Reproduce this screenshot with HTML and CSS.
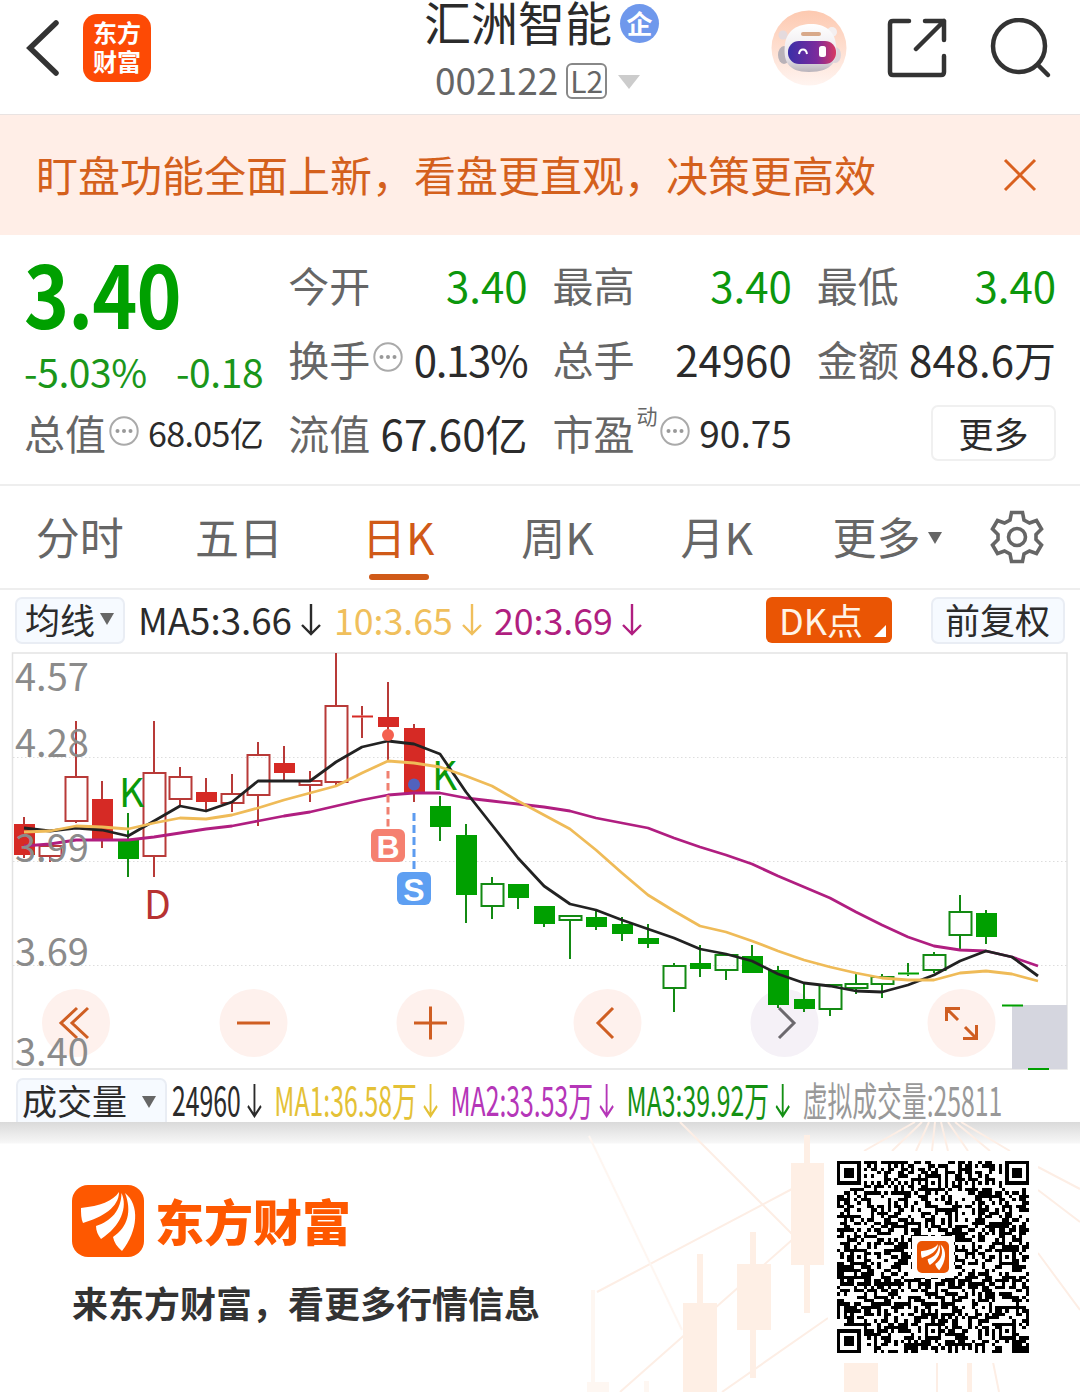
FILE: index.html
```html
<!DOCTYPE html>
<html lang="zh-CN">
<head>
  <meta charset="UTF-8" />
  <meta name="viewport" content="width=device-width, initial-scale=1.0"/>
  <title>汇洲智能 002122</title>
  <link rel="stylesheet" href="styles.css">
</head>
<body>
  <svg width="0" height="0" class="defs">
    <symbol id="dots" viewBox="0 0 30 30">
      <circle cx="15" cy="15" r="13.7" fill="none" stroke="#aaa" stroke-width="2"/>
      <circle cx="8.5" cy="15" r="2" fill="#999"/><circle cx="15" cy="15" r="2" fill="#999"/><circle cx="21.5" cy="15" r="2" fill="#999"/>
    </symbol>
    <symbol id="down" viewBox="0 0 20 32">
      <path d="M10 0V30M1 21L10 30L19 21" fill="none" stroke="currentColor" stroke-width="2.4"/>
    </symbol>
    <symbol id="down-tall" viewBox="0 0 24 34" preserveAspectRatio="none">
      <path d="M12 0V32M1.5 22L12 32L22.5 22" fill="none" stroke="currentColor" stroke-width="3"/>
    </symbol>
    <symbol id="leaf" viewBox="0 0 72 72">
      <path d="M9 23C28 21 41 16 47 7C47 22 31 32 11 38C9 34 9 28 9 23Z"/>
      <path d="M24 41C39 36 49 26 49.500 8C56 22 49 41 29 54C26 50 24 46 24 41Z"/>
      <path d="M41 52C56 42 60 26 53 8C68 20 66 46 50 66C45 62 42 57 41 52Z"/>
    </symbol>
  </svg>

  <header class="header">
    <div class="header-left">
      <svg class="back" width="36" height="58" viewBox="0 0 36 58"><path d="M30 4L4 29L30 54" fill="none" stroke="#333" stroke-width="5.500" stroke-linecap="round"/></svg>
      <div class="app-icon">东方<br>财富</div>
    </div>
    <div class="stock">
      <div class="stock-name"><span>汇洲智能</span><span class="badge">企</span></div>
      <div class="stock-code"><span>002122</span><span class="level">L2</span><span class="tri tri-light"></span></div>
    </div>
    <div class="header-right">
      <svg width="76" height="76" viewBox="0 0 76 76">
        <defs>
          <linearGradient id="halo" x1="0" y1="0" x2="0" y2="1"><stop offset="0" stop-color="#fdc9b0"/><stop offset="1" stop-color="#fff4f0"/></linearGradient>
          <linearGradient id="visor"><stop offset="0" stop-color="#3a2fa8"/><stop offset=".6" stop-color="#7b2a9c"/><stop offset="1" stop-color="#d83a62"/></linearGradient>
          <linearGradient id="head" x1="0" y1="0" x2="0" y2="1"><stop offset="0" stop-color="#fff"/><stop offset=".7" stop-color="#e9e5ea"/><stop offset="1" stop-color="#b9b3bb"/></linearGradient>
        </defs>
        <circle cx="38" cy="38" r="37.5" fill="url(#halo)"/>
        <circle cx="12" cy="25" r="4.5" fill="#e4dadd"/><circle cx="61" cy="22" r="5" fill="#f4eff0"/>
        <ellipse cx="13" cy="45" rx="6" ry="9" fill="#b9b2b8"/><ellipse cx="64" cy="45" rx="6" ry="8" fill="#ddd5da"/>
        <path d="M14 34C16 20 27 14 40 14C54 14 64 21 65 35C67 50 62 62 38 62C16 62 12 50 14 34Z" fill="url(#head)"/>
        <rect x="30" y="22" width="20" height="4" rx="2" fill="#d8a98a"/>
        <rect x="17" y="31" width="48" height="23" rx="11" fill="url(#visor)"/>
        <path d="M28 44C29 38 35 38 36 44" fill="none" stroke="#fff" stroke-width="2"/>
        <rect x="48" y="36" width="7" height="11" rx="2.500" fill="#fff"/>
      </svg>
      <svg class="share" width="60" height="62" viewBox="0 0 60 62" fill="none" stroke="#333" stroke-width="4.500" stroke-linecap="round" stroke-linejoin="round">
        <path d="M22 4H6Q3 4 3 7V55Q3 58 6 58H54Q57 58 57 55V39M38 4H57V23M57 4L29 32"/>
      </svg>
      <svg class="search" width="62" height="62" viewBox="0 0 62 62" fill="none" stroke="#333" stroke-width="4.500" stroke-linecap="round">
        <circle cx="29" cy="28" r="26"/><path d="M48 47L58 57"/>
      </svg>
    </div>
  </header>

  <div class="notice">
    <span>盯盘功能全面上新，看盘更直观，决策更高效</span>
    <svg width="34" height="34" viewBox="0 0 34 34"><path d="M2 2L32 32M32 2L2 32" stroke="#d9601f" stroke-width="3"/></svg>
  </div>

  <section class="quote">
    <div class="price-box">
      <div class="price">3.40</div>
      <div class="change"><span>-5.03%</span><span>-0.18</span></div>
    </div>
    <div class="cell"><label>今开</label><b class="green">3.40</b></div>
    <div class="cell"><label>最高</label><b class="green">3.40</b></div>
    <div class="cell"><label>最低</label><b class="green">3.40</b></div>
    <div class="cell"><label>换手</label><svg class="info"><use href="#dots"/></svg><b class="rate">0.13%</b></div>
    <div class="cell"><label>总手</label><b>24960</b></div>
    <div class="cell"><label>金额</label><b>848.6万</b></div>
    <div class="cell"><label>总值</label><svg class="info"><use href="#dots"/></svg><b class="cap">68.05亿</b></div>
    <div class="cell"><label>流值</label><b>67.60亿</b></div>
    <div class="cell"><label>市盈</label><sup>动</sup><svg class="info"><use href="#dots"/></svg><b class="pe">90.75</b></div>
    <div class="cell"><button class="more">更多</button></div>
  </section>

  <nav class="tabs">
    <a>分时</a>
    <a>五日</a>
    <a class="active">日K</a>
    <a>周K</a>
    <a>月K</a>
    <a class="tab-more">更多<span class="tri tri-small"></span></a>
    <svg width="54" height="54" viewBox="0 0 54 54" fill="none" stroke="#666" stroke-width="3.6">
      <path d="M21.5 2.5H32.5L34 10L39.5 13L46.5 10.5L51.5 19L46 24.5V29.5L51.5 35L46.5 43.5L39.5 41L34 44L32.5 51.5H21.5L20 44L14.5 41L7.500 43.500L2.500 35L8 29.500V24.500L2.500 19L7.500 10.500L14.500 13L20 10Z"/>
      <circle cx="27" cy="27" r="8.500"/>
    </svg>
  </nav>

  <div class="ma-row">
    <div class="chip chip-ma">均线<span class="tri tri-small"></span></div>
    <div class="ma ma5">MA5:3.66<svg><use href="#down"/></svg></div>
    <div class="ma ma10">10:3.65<svg><use href="#down"/></svg></div>
    <div class="ma ma20">20:3.69<svg><use href="#down"/></svg></div>
    <div class="dk">DK点<i></i></div>
    <div class="chip chip-right">前复权</div>
  </div>

  <div class="chart-box">
    <svg class="chart" id="chart" width="1080" height="424" viewBox="0 650 1080 424">
      <rect x="12.500" y="653" width="1054.500" height="416" fill="none" stroke="#e3e3e3" stroke-width="1.500"/>
      <path class="grid" d="M13 757.500H1067M13 861.500H1067M13 965.500H1067"/>
      <rect x="1012" y="1005" width="55" height="64" fill="#d5d6df"/>
      <g id="zoom-buttons">
        <circle cx="76" cy="1023" r="34"/>
        <circle cx="253.500" cy="1023" r="34"/>
        <circle cx="430.500" cy="1023" r="34"/>
        <circle cx="607.500" cy="1023" r="34"/>
        <circle cx="784.500" cy="1023" r="34" class="disabled"/>
        <circle cx="961.500" cy="1023" r="34"/>
      </g>
      <g id="candles"></g>
      <text x="119" y="807" class="mark" fill="#0a9a0a">K</text>
      <text x="432" y="790" class="mark" fill="#0a9a0a">K</text>
      <text x="144" y="919" class="mark" fill="#b73232">D</text>
      <g id="lines"></g>
      <circle cx="388" cy="735" r="6" fill="#f4604f"/>
      <circle cx="414" cy="784.500" r="6" fill="#5162bd"/>
      <path d="M388 771V828" stroke="#f08070" stroke-width="3" stroke-dasharray="7.500 4.500"/>
      <path d="M414 813V870" stroke="#5d9cf0" stroke-width="3" stroke-dasharray="8 4"/>
      <rect x="371" y="829" width="34" height="33" rx="6" fill="#f58070"/>
      <rect x="397" y="872" width="34" height="33" rx="6" fill="#5e9ff2"/>
      <text x="388" y="857.500" class="flag">B</text>
      <text x="414" y="900.500" class="flag">S</text>
      <g fill="none" stroke="#cf5e22" stroke-width="3">
        <path d="M77 1008L61 1023L77 1038M88 1008L72 1023L88 1038"/>
        <path d="M237 1023H270"/>
        <path d="M414 1023H447M430.500 1006.500V1039.500"/>
        <path d="M613 1008L598 1023L613 1038"/>
        <path d="M779 1008L794 1023L779 1038" stroke="#6c696e"/>
        <path d="M946.500 1021V1008.500H960M947 1009L958 1020M976.500 1025V1038.500H963M976 1038L965 1027"/>
      </g>
      <g class="axis">
        <text x="15" y="691">4.57</text>
        <text x="15" y="757">4.28</text>
        <text x="15" y="862">3.99</text>
        <text x="15" y="966">3.69</text>
        <text x="15" y="1066">3.40</text>
      </g>
    </svg>
  </div>

  <div class="vol-row">
    <div class="chip chip-vol">成交量<span class="tri tri-small"></span></div>
    <div class="vol-values">
      <span class="v0">24960<svg><use href="#down-tall"/></svg></span>
      <span class="v1">MA1:36.58万<svg><use href="#down-tall"/></svg></span>
      <span class="v2">MA2:33.53万<svg><use href="#down-tall"/></svg></span>
      <span class="v3">MA3:39.92万<svg><use href="#down-tall"/></svg></span>
      <span class="v4">虚拟成交量:25811</span>
    </div>
  </div>

  <footer class="footer">
    <svg class="footer-bg" width="1080" height="270" viewBox="0 1122 1080 270">
      <g stroke="#fdeee5" stroke-width="2" fill="none">
        <path d="M680 1122L792 1234M597 1292L792 1189M620 1392L792 1240M722 1392L828 1318"/>
        <path d="M589 1136L682 1330" stroke="#fef6f1"/>
        <path d="M915 1122L864 1151M922 1122L892 1151M929 1122L916 1151M935 1122L932 1151M941 1122L948 1151M948 1122L968 1151M955 1122L990 1151M961 1122L1010 1151M1038 1167L1080 1189M1038 1190L1080 1222M1038 1253L1080 1310M937 1362V1392M993 1362L999 1392"/>
      </g>
      <g fill="#feefe5">
        <path d="M804 1135h6v28h14v102h-14v48h-6v-48h-13v-102h13z"/>
        <path d="M750 1232h6v32h15v66h-15v48h-6v-48h-13v-66h13z"/>
        <path d="M697 1254h6v49h14v89h-34v-89h14z"/>
        <path d="M844 1362h34v30h-34zM967 1362h5v30h-5z"/>
        <path d="M591 1290h4v92h14v10h-22v-10h4zM644 1381h5v11h-5z" fill="#fef7f2"/>
      </g>
    </svg>
    <div class="brand">
      <div class="brand-top">
        <svg class="brand-logo"><use href="#leaf"/></svg>
        <span>东方财富</span>
      </div>
      <p>来东方财富，看更多行情信息</p>
    </div>
    <div class="qr">
      <svg id="qr" width="192" height="192" viewBox="0 0 57 57" shape-rendering="crispEdges"></svg>
      <div class="qr-logo"><svg><use href="#leaf"/></svg></div>
    </div>
  </footer>

  <script src="script.js"></script>
</body>
</html>
```

FILE: styles.css
```css
* {
  margin: 0; padding: 0; box-sizing: border-box;
}

body {
  width: 1080px;
  height: 1392px;
  overflow: hidden;
  background: #fff;
  color: #2b2b2b;
  font-family: 'Noto Sans CJK SC', sans-serif;
  white-space: nowrap;
}

svg { flex: none; }
.defs { position: absolute; }

.tri {
  display: inline-block;
  border-style: solid;
  border-color: #666 transparent transparent;
}
.tri-light {
  border-width: 14px 11px 0;
  border-top-color: #ccc;
  margin-left: 11px;
}
.tri-small { border-width: 12px 7.5px 0; }

/* header */
.header {
  display: flex;
  height: 115px;
  border-bottom: 1px solid #e9e3e2;
}
.header-left {
  display: flex;
  width: 424px;
  padding-left: 26px;
}
.back { margin-top: 19px; }
.app-icon {
  width: 68px;
  height: 68px;
  margin: 14px 0 0 21px;
  padding-top: 3px;
  border-radius: 14px;
  background: #fd4a05;
  color: #fff;
  font-size: 24px;
  font-weight: bold;
  line-height: 29px;
  text-align: center;
}
.stock-name {
  display: flex;
  align-items: center;
  height: 46px;
  font-size: 47px;
  line-height: 46px;
}
.stock-name span:first-child { margin-top: -4px; }
.badge {
  width: 39px;
  height: 39px;
  margin-left: 8px;
  border-radius: 50%;
  background: #6f98ec;
  color: #fff;
  font-size: 26px;
  font-weight: bold;
  line-height: 37px;
  text-align: center;
}
.stock-code {
  display: flex;
  align-items: center;
  height: 44px;
  margin-top: 13px;
  padding-left: 11px;
  color: #666;
  font-size: 37px;
  line-height: 44px;
}
.stock-code span:first-child { margin-top: -4px; }
.stock-code .tri { margin-bottom: -2px; }
.level {
  width: 41px;
  height: 36px;
  margin: 0 0 0 8px;
  border: 2px solid #888;
  border-radius: 6px;
  font-size: 30px;
  line-height: 30px;
  text-align: center;
}
.header-right {
  display: flex;
  margin-left: auto;
  padding: 10px 28px 0 0;
}
.share { margin: 7px 0 0 40px; }
.search { margin: 8px 0 0 43px; }

/* notice */
.notice {
  display: flex;
  align-items: center;
  justify-content: space-between;
  height: 120px;
  padding: 0 43px 0 36px;
  background: #ffeee7;
  color: #d4601c;
  font-size: 42px;
}
.notice span { line-height: 60px; margin-top: -2px; }

/* quote */
.quote {
  display: grid;
  grid-template-columns: repeat(4, 1fr);
  grid-template-rows: 74px 74px 74px;
  column-gap: 25px;
  height: 251px;
  padding: 12px 24px 0;
  border-bottom: 2px solid #eee;
}
.price-box {
  grid-row: span 2;
  color: #00a000;
}
.price {
  height: 93px;
  font-size: 86px;
  font-weight: bold;
  line-height: 90px;
  letter-spacing: -1px;
  transform: scaleX(.89);
  transform-origin: left;
}
.change {
  display: flex;
  justify-content: space-between;
  color: #1a961a;
  font-size: 39px;
  line-height: 62px;
  letter-spacing: -.4px;
}
.cell {
  display: flex;
  align-items: center;
  height: 74px;
}
.cell label {
  color: #666;
  font-size: 41px;
}
.cell b {
  margin-left: auto;
  font-size: 42px;
  font-weight: normal;
}
.cell .green { color: #0c970c; }
.cell .rate { font-size: 42px; letter-spacing: -1.3px; }
.cell .cap { font-size: 34px; letter-spacing: -.6px; }
.cell .pe { font-size: 37px; }
.cell sup {
  align-self: flex-start;
  margin: 5px 0 0 2px;
  color: #666;
  font-size: 21px;
}
.info {
  width: 30px;
  height: 30px;
  margin: -2px 0 0 3px;
}
.cell sup + .info { margin-left: 2px; }
.more {
  width: 125px;
  height: 56px;
  margin: 2px 0 0 auto;
  border: 2px solid #f0f0f0;
  border-radius: 7px;
  background: #fff;
  color: #2b2b2b;
  font: 35px/46px 'Noto Sans CJK SC', sans-serif;
}

/* period tabs */
.tabs {
  display: flex;
  height: 104px;
  border-bottom: 2px solid #eee;
  color: #666;
  font-size: 44px;
  line-height: 100px;
}
.tabs a {
  position: relative;
  width: 159.3px;
  text-align: center;
}
.tabs .tab-more { width: 182px; }
.tabs .tri { margin: 0 0 11px 8px; vertical-align: 0; }
.tabs svg { margin: 24px 0 0 12px; }
.tabs .active { color: #d05a18; }
.active::after {
  content: '';
  position: absolute;
  left: 50px; bottom: 8px;
  width: 60px; height: 6px;
  border-radius: 3px;
  background: #d05a18;
}

/* moving averages */
.ma-row {
  display: flex;
  height: 60px;
  padding: 7px 15px 0;
}
.chip {
  flex: none;
  height: 47px;
  border: 2px solid #e9edf4;
  border-radius: 7px;
  background: #f6faff;
  font-size: 35px;
  line-height: 40px;
}
.chip-ma { width: 110px; padding-left: 8px; margin-right: 13px; }
.chip-ma .tri { margin: 0 0 9px 5px; }
.ma {
  display: flex;
  height: 46px;
  font-size: 36.7px;
  line-height: 45px;
}
.ma svg { width: 20px; height: 32px; margin: 7px 0 0 9px; }
.ma5 { width: 196px; }
.ma10 { width: 160px; color: #f0bf5c; }
.ma20 { width: 160px; color: #b01e80; }
.ma10, .ma20 { font-size: 35.7px; }
.dk {
  position: relative;
  width: 126px;
  height: 46px;
  margin-left: auto;
  padding-left: 13px;
  border-radius: 6px;
  background: #ea5504;
  color: #fff3e6;
  font-size: 36px;
  line-height: 44px;
}
.dk i {
  position: absolute;
  right: 6px; bottom: 6px;
  border-style: solid;
  border-width: 0 0 12px 12px;
  border-color: transparent transparent #fff;
}
.chip-right { width: 134px; margin-left: 39px; padding-left: 12px; }

/* k-line chart */
.chart-box { height: 424px; }
.chart { display: block; }
.grid { stroke: #ddd; stroke-dasharray: 1.5 2.5; }
.axis { fill: #8b8b8b; font-size: 38px; }
.mark { font-size: 39px; }
.flag {
  fill: #fff;
  font: bold 32px 'Liberation Sans', sans-serif;
  text-anchor: middle;
}
#zoom-buttons { fill: #fef1ed; }
#zoom-buttons .disabled { fill: #f5f1f7; }

/* volume */
.vol-row {
  display: flex;
  height: 48px;
  padding: 4px 0 0 16px;
  overflow: hidden;
}
.chip-vol { width: 151px; height: 50px; padding-left: 4px; }
.chip-vol .tri { margin: 0 0 7px 15px; }
.vol-values {
  display: flex;
  flex: none;
  gap: 20px;
  height: 44px;
  width: 1440px;
  margin-left: 5px;
  font-size: 40px;
  line-height: 42px;
  transform: scaleX(.62);
  transform-origin: left;
}
.vol-values span { display: flex; }
.vol-values svg { width: 24px; height: 34px; margin: 6px 0 0 10px; }
.v1 { color: #e4c136; }
.v2 { color: #b536b8; }
.v3 { color: #149014; }
.v4 { color: #999; }

/* footer */
.footer {
  position: relative;
  display: flex;
  justify-content: space-between;
  height: 270px;
  padding: 29px 42px 0 72px;
  background: linear-gradient(#dadada, #f7f7f7 21px, #fff 22px);
}
.footer-bg {
  position: absolute;
  left: 0; top: 0;
}
.brand { padding-top: 34px; }
.brand-top {
  display: flex;
  align-items: center;
  height: 72px;
  color: #fe5800;
  font-size: 49px;
  font-weight: 900;
}
.brand-top span { margin: -4px 0 0 11px; }
.brand-logo {
  width: 72px;
  height: 72px;
  border-radius: 16px;
  background: #fe5800;
  fill: #fff;
}
.brand p {
  margin-top: 18px;
  color: #333;
  font-size: 36px;
  font-weight: bold;
  line-height: 54px;
}
.qr {
  position: relative;
  width: 210px;
  height: 212px;
  padding: 10px 9px;
  background: #fff;
}
.qr-logo {
  position: absolute;
  left: 84px; top: 85px;
  width: 42px; height: 42px;
  padding: 5px;
  background: #fff;
}
.qr-logo svg {
  display: block;
  width: 32px;
  height: 32px;
  border-radius: 5px;
  background: #ea5504;
  fill: #fff;
}
```

FILE: script.js
```js
const RED = '#d62a25', RED_LINE = '#b83a38', GREEN = '#00a000', GREEN_LINE = '#138a13';

// high, body top, body bottom, low, colour, filled
const candles = [
  [817, 824, 855, 858, 'r', 1], [846, 846, 856, 862, 'r', 0], [721, 777, 821, 823, 'r', 0], [781, 799, 841, 848, 'r', 1],
  [813, 839, 859, 877, 'g', 1], [721, 773, 856, 877, 'r', 0], [767, 777, 799, 805, 'r', 0], [778, 792, 802, 812, 'r', 1],
  [774, 794, 803, 812, 'r', 0], [742, 755, 795, 826, 'r', 0], [746, 763, 773, 780, 'r', 1], [771, 781, 785, 802, 'r', 0],
  [653, 706, 782, 786, 'r', 0], [706, 715.5, 717.5, 738, 'r', 1], [682, 717, 727, 760, 'r', 1], [724, 728, 793, 802, 'r', 1],
  [796, 806, 827, 841, 'g', 1], [824, 835, 895, 923, 'g', 1], [877, 884, 906, 919, 'g', 0], [884, 884, 898, 909, 'g', 1],
  [906, 906, 924, 927, 'g', 1], [916, 916, 920, 959, 'g', 0], [910, 917, 927, 930, 'g', 1], [917, 924, 934, 941, 'g', 1],
  [924, 938, 944, 948, 'g', 1], [963, 966, 988, 1012, 'g', 0], [945, 963, 969, 977, 'g', 1], [954, 955, 970, 980, 'g', 0],
  [945, 956, 973, 973, 'g', 1], [966, 970, 1005, 1008, 'g', 1], [983, 999, 1009, 1012, 'g', 1], [985, 985, 1009, 1016, 'g', 0],
  [974, 984, 988, 994, 'g', 0], [974, 977, 984, 998, 'g', 0], [963, 972.5, 974.5, 976, 'g', 1], [952, 955, 970, 973, 'g', 0],
  [895, 912, 935, 949, 'g', 0], [910, 913, 937, 944, 'g', 1], [1004.5, 1004.5, 1006.5, 1006.5, 'g', 1], [1068, 1068, 1070, 1070, 'g', 1]
];

let out = '';
candles.forEach(([high, top, bottom, low, c, filled], i) => {
  const x = 24 + i * 26;
  const line = c === 'r' ? RED_LINE : GREEN_LINE;
  out += `<path d="M${x} ${high}V${top}M${x} ${bottom}V${low}" stroke="${line}" stroke-width="2"/>`;
  if (filled) {
    out += `<rect x="${x - 10}" y="${top}" width="21" height="${bottom - top}" fill="${c === 'r' ? RED : GREEN}"/>`;
  } else {
    out += `<rect x="${x - 10.5}" y="${top}" width="22" height="${bottom - top}" fill="none" stroke="${line}" stroke-width="2"/>`;
  }
});
document.getElementById('candles').innerHTML = out;

const averages = {
  '#b01e80': [846, 844, 840, 840, 840, 837, 833, 829, 826, 821, 816, 812, 806, 800, 795, 793, 793, 798, 801, 804, 807, 811, 818, 823, 828, 838, 847, 855, 864, 876, 887, 898, 912, 925, 937, 946, 950, 951, 957, 966],
  '#222': [828, 831, 828, 830, 836, 821, 806, 811, 802, 781, 781, 781, 762, 747, 741, 744, 754, 792, 825, 858, 886, 904, 910, 920, 929, 938, 949, 954, 961, 974, 983, 986, 991, 992, 985, 975, 961, 951, 957, 976],
  '#efbb58': [832, 831, 826, 827, 829, 823, 818, 819, 815, 808, 800, 793, 786, 773, 761, 763, 767, 776, 786, 801, 815, 829, 850, 873, 895, 911, 926, 932, 941, 951, 960, 967, 973, 978, 980, 980, 973, 971, 974, 981]
};
document.getElementById('lines').innerHTML = Object.entries(averages).map(([color, ys]) =>
  `<polyline fill="none" stroke="${color}" stroke-width="2.8" stroke-linejoin="round" points="${ys.map((y, i) => `${24 + i * 26},${y}`).join(' ')}"/>`
).join('');

// qr modules
const N = 57;
let seed = 20021;
const rand = () => (seed = (seed * 16807) % 2147483647) / 2147483647;
const ring = (x, y, cx, cy) => Math.max(Math.abs(x - cx), Math.abs(y - cy));
const finders = [[3, 3], [N - 4, 3], [3, N - 4]];
const aligns = [[28, 6], [6, 28], [50, 28], [28, 50], [50, 50]];

function dark(x, y) {
  const r = rand();
  for (const [cx, cy] of finders) {
    const d = ring(x, y, cx, cy);
    if (d <= 4) return d < 2 || d === 3;
  }
  for (const [cx, cy] of aligns) {
    const d = ring(x, y, cx, cy);
    if (d <= 2) return d !== 1;
  }
  if (x === 6 || y === 6) return (x + y) % 2 === 0;
  return r < 0.5;
}

let modules = '';
for (let y = 0; y < N; y++) {
  for (let x = 0; x < N; x++) {
    if (dark(x, y)) modules += `M${x} ${y}h1v1h-1z`;
  }
}
document.getElementById('qr').innerHTML = `<path d="${modules}"/>`;
```
